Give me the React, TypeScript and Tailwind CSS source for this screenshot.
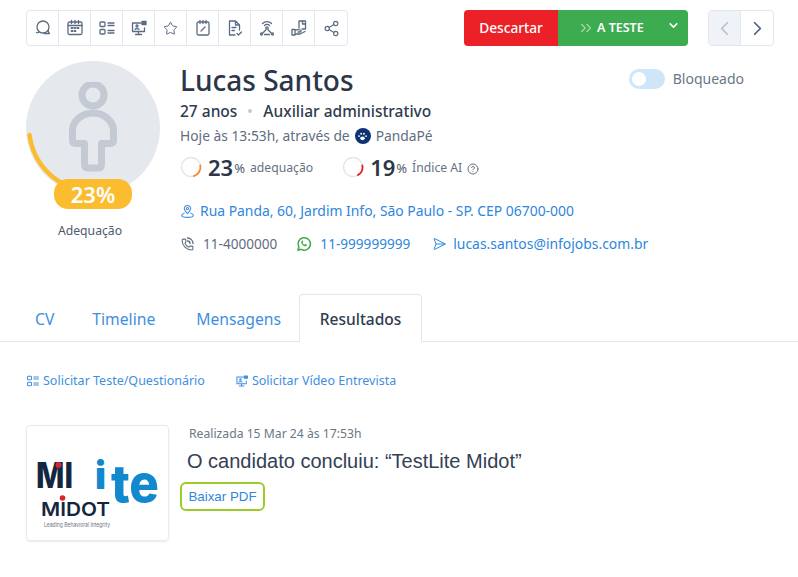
import { ChevronDown, ChevronLeft, ChevronRight, ChevronsRight, CircleHelp, Phone, Send, Share2, Star } from 'lucide-react';
import type { ReactNode } from 'react';

const ink = '#5b6b82';

function Glyph({ children, color = ink, size = 18 }: { children: ReactNode; color?: string; size?: number }) {
  return (
    <svg width={size} height={size} viewBox="0 0 18 18" fill="none" stroke={color} strokeWidth="1.3" strokeLinecap="round" strokeLinejoin="round">
      {children}
    </svg>
  );
}

const ChatIcon = () => (
  <Glyph>
    <circle cx="9" cy="8" r="6" />
    <path d="M2.500 13.500c1 .6 2 .4 3-.6M10 14.500h5.500c-.8-.7-1.200-1.600-1.200-2.800" />
  </Glyph>
);

const CalendarIcon = () => (
  <Glyph>
    <rect x="2" y="3" width="14" height="12.500" rx="1.500" />
    <path d="M2 6.500h14M5.500 1.500v3M9 1.500v3M12.500 1.500v3" />
    <path d="M5.500 9h1M8.500 9h1M11.500 9h1M5.500 12h1M8.500 12h1" strokeWidth="1.800" />
  </Glyph>
);

const ListIcon = ({ color = ink, size = 18 }: { color?: string; size?: number }) => (
  <Glyph color={color} size={size}>
    <rect x="2" y="3" width="5" height="4.500" rx="1" />
    <rect x="2" y="10.500" width="5" height="4.500" rx="1" />
    <path d="M10 4h6M10 6.500h6M10 11.500h6M10 14h6" />
  </Glyph>
);

const ScreenIcon = ({ color = ink, size = 18 }: { color?: string; size?: number }) => (
  <Glyph color={color} size={size}>
    <path d="M11 4H2.500v8.500h12V9M8.500 12.500V15.500M5.500 15.500h6" />
    <circle cx="7" cy="7" r="1" />
    <path d="M5 10.500c.4-1.300 3.600-1.300 4 0" />
    <path d="M12 2.500h4v3h-4z" fill={color} />
  </Glyph>
);

const NoteIcon = () => (
  <Glyph>
    <rect x="3" y="3" width="12" height="13" rx="1.500" />
    <path d="M6 1.500v3M9 1.500v3M12 1.500v3M7 12l4-4" />
  </Glyph>
);

const FileCheckIcon = () => (
  <Glyph>
    <path d="M9 16H3.500V2h6l4 4v5M9.500 2v4h4" />
    <path d="M6 8.500h4M6 11.500h2.500M11 14.500l1.500 1.500 3-3" />
  </Glyph>
);

const SignalIcon = () => (
  <Glyph>
    <circle cx="9" cy="9" r="1.200" />
    <path d="M6.500 6.500a3.500 3.500 0 0 1 5 0M4.500 4.500a6.500 6.500 0 0 1 9 0" />
    <path d="M7.800 11l-3 3M10.200 11l3 3M6.500 15.500h5" />
    <circle cx="3.500" cy="15" r="1" />
    <circle cx="14.500" cy="15" r="1" />
  </Glyph>
);

const HandDocIcon = () => (
  <Glyph>
    <path d="M9 9V2h6.500v8H12" />
    <path d="M12.500 2v3h3" />
    <path d="M2 10.500h3v5.500H2zM5 11.500c2-1.500 4-1 5.500-.5 1 .5.500 2-.5 2H8M5 15h5l5-2.500" />
  </Glyph>
);

const PinIcon = () => (
  <Glyph color="#3f8fe0" size={15}>
    <path d="M9 11.500c-2-2-3.800-3.800-3.800-6a3.800 3.800 0 0 1 7.600 0c0 2.200-1.800 4-3.800 6z" />
    <circle cx="9" cy="5.500" r="1.300" />
    <path d="M5 11c-1.800.6-3 1.500-3 2.500C2 15 5 16 9 16s7-1 7-2.500c0-1-1.200-1.900-3-2.500" />
  </Glyph>
);

const WhatsappIcon = () => (
  <svg width="16" height="16" viewBox="0 0 18 18" fill="none">
    <path d="M2.200 16l1-3.600A7 7 0 1 1 5.800 15z" stroke="#3fa84c" strokeWidth="1.700" strokeLinejoin="round" />
    <path d="M6.500 5.500c-1 1-.8 2.500.5 4s3 2.400 4.300 1.900c.8-.3 1.100-1 1-1.500l-1.800-.9-.8.900c-1-.4-1.900-1.300-2.400-2.400l.8-.8-.8-1.800c-.1-.1-.2 0-.8.600z" fill="#3fa84c" />
  </svg>
);

const PhoneWavesIcon = () => (
  <span className="relative flex h-[14px] w-[14px] items-center justify-center">
    <Phone size={13} color="#5f6d80" strokeWidth={2} />
    <svg width="14" height="14" viewBox="0 0 14 14" fill="none" stroke="#5f6d80" strokeWidth="1.300" strokeLinecap="round" className="absolute inset-0">
      <path d="M7.500 1a5.500 5.500 0 0 1 5.500 5.500M7.500 4a2.500 2.500 0 0 1 2.500 2.500" />
    </svg>
  </span>
);

function Ring({ stroke, dash }: { stroke: string; dash: string }) {
  return (
    <svg width="22" height="22" viewBox="0 0 22 22" fill="none" className="shrink-0">
      <circle cx="11" cy="11" r="9.500" stroke="#e2e6ec" strokeWidth="1.500" />
      <circle cx="11" cy="11" r="9.500" stroke={stroke} strokeWidth="1.800" strokeDasharray={dash} pathLength={100} transform="rotate(-10 11 11)" strokeLinecap="round" />
    </svg>
  );
}

function Avatar() {
  return (
    <div className="relative h-[149px] w-[134px] shrink-0">
      <div className="flex h-[134px] w-[134px] items-center justify-center rounded-full bg-[#e5e8ed]">
        <svg width="50" height="92" viewBox="0 0 50 92" fill="none" stroke="#c3cad4" strokeWidth="7" strokeLinejoin="round" className="mt-[-1px]">
          <circle cx="25" cy="13" r="11" />
          <path d="M25 31c-11 0-20.500 8-20.500 18v9.500c0 2 1 3 3 3h9v20.500c0 3 1 4 3.500 4h10c2.500 0 3.500-1 3.500-4v-20.500h9c2 0 3-1 3-3v-9.500c0-10-9.500-18-20.500-18z" />
        </svg>
      </div>
      <svg width="134" height="134" viewBox="0 0 134 134" fill="none" className="absolute left-0 top-0">
        <path d="M3.500 74a64 64 0 0 0 36 50" stroke="#fbbc2f" strokeWidth="4.500" strokeLinecap="round" />
      </svg>
      <div className="absolute left-[28px] top-[118px] flex h-[30px] w-[78px] items-center justify-center rounded-[14px] bg-[#fcbc30] text-[22px] font-semibold text-white">
        23%
      </div>
    </div>
  );
}

function MidotLogo() {
  return (
    <svg width="130" height="92" viewBox="0 0 130 92">
      <text x="3" y="51" fontFamily="Inter, sans-serif" fontWeight="800" fontSize="36" fill="#14263f" textLength="37" lengthAdjust="spacingAndGlyphs">MI</text>
      <circle cx="25.500" cy="28" r="3" fill="#d8262c" />
      <text x="62" y="52" fontFamily="Inter, sans-serif" fontWeight="900" fontSize="38" fill="#1288cf" textLength="11" lengthAdjust="spacingAndGlyphs">i</text>
      <text x="78" y="65" fontFamily="Inter, sans-serif" fontWeight="800" fontSize="52" fill="#1288cf" textLength="48" lengthAdjust="spacingAndGlyphs">te</text>
      <text x="8" y="79" fontFamily="Inter, sans-serif" fontWeight="600" fontSize="19" fill="#14263f" textLength="69" lengthAdjust="spacingAndGlyphs">MIDOT</text>
      <circle cx="29.500" cy="61" r="2.800" fill="#d8262c" />
      <text x="11" y="90" fontFamily="Inter, sans-serif" fontSize="5.500" fill="#6b7280" textLength="66" lengthAdjust="spacingAndGlyphs">Leading Behavioral Integrity</text>
    </svg>
  );
}

const toolbar = [
  <ChatIcon key="chat" />,
  <CalendarIcon key="calendar" />,
  <ListIcon key="list" />,
  <ScreenIcon key="screen" />,
  <Star key="star" size={15} color={ink} strokeWidth={1.6} />,
  <NoteIcon key="note" />,
  <FileCheckIcon key="file" />,
  <SignalIcon key="signal" />,
  <HandDocIcon key="hand" />,
  <Share2 key="share" size={17} color={ink} strokeWidth={1.6} />,
];

export default function App() {
  return (
    <div className="h-[577px] w-[798px] overflow-hidden bg-white font-['Noto_Sans',sans-serif] text-[#2f3b4e]">
      {/* Top actions */}
      <div className="flex items-start pl-[26px] pt-[10px]">
        <div className="flex h-[36px] shrink-0 rounded border border-[#e3e6ec]">
          {toolbar.map((icon, i) => (
            <div key={i} className="flex h-full w-[32px] items-center justify-center border-r border-[#e3e6ec] last:border-r-0">
              {icon}
            </div>
          ))}
        </div>
        <div className="ml-[116px] flex h-[36px] shrink-0 overflow-hidden rounded">
          <div className="flex w-[94px] items-center justify-center bg-[#ec2027] text-[13.700px] font-medium text-white">Descartar</div>
          <div className="flex w-[130px] items-center bg-[#3dab4f] pl-[19px] text-white">
            <ChevronsRight size={18} color="#a6dcae" strokeWidth={1.5} />
            <span className="ml-[2px] text-[12.500px] font-semibold">A TESTE</span>
            <ChevronDown size={13} strokeWidth={3} className="mb-[6px] ml-[23px]" />
          </div>
        </div>
        <div className="ml-[20px] flex h-[36px] shrink-0 rounded border border-[#e3e6ec]">
          <div className="flex w-[32px] items-center justify-center border-r border-[#e3e6ec] bg-[#eff2f6]">
            <ChevronLeft size={23} color="#b7c0cc" strokeWidth={1.8} />
          </div>
          <div className="flex w-[32px] items-center justify-center">
            <ChevronRight size={23} color="#4b6078" strokeWidth={1.8} />
          </div>
        </div>
      </div>

      {/* Candidate */}
      <div className="flex gap-[20px] px-[26px] pt-[15px]">
        <div className="flex flex-col items-center">
          <Avatar />
          <div className="mr-[6px] mt-[12px] text-[12.200px] text-[#4f5b6b]">Adequação</div>
        </div>
        <div className="flex-1">
          <div className="flex items-start justify-between pr-[28px]">
            <h1 className="text-[28px] font-medium leading-[38px] text-[#2b3648]">Lucas Santos</h1>
            <div className="mt-[7px] flex items-center gap-[8px]">
              <div className="flex h-[20px] w-[36px] items-center rounded-full bg-[#cfe5f8] px-[3px]">
                <div className="h-[14px] w-[14px] rounded-full bg-white" />
              </div>
              <span className="text-[14px] text-[#6a7789]">Bloqueado</span>
            </div>
          </div>
          <div className="mt-[1px] flex items-center text-[15.500px] font-medium leading-[22px] text-[#2f3b4e]">
            <span>27 anos</span>
            <span className="mx-[11px] h-[4px] w-[4px] rounded-full bg-[#c3cad4]" />
            <span>Auxiliar administrativo</span>
          </div>
          <div className="mt-[3px] flex items-center text-[13.800px] leading-[22px] text-[#5f6d80]">
            <span>Hoje às 13:53h, através de</span>
            <span className="mx-[5px] flex h-[16px] w-[16px] items-center justify-center rounded-full bg-[#0f3274]">
              <svg width="11" height="11" viewBox="0 0 12 12" fill="#fff">
                <ellipse cx="6" cy="8" rx="2.500" ry="2" />
                <circle cx="2.200" cy="5.500" r="1" />
                <circle cx="4.500" cy="3" r="1" />
                <circle cx="7.500" cy="3" r="1" />
                <circle cx="9.800" cy="5.500" r="1" />
              </svg>
            </span>
            <span>PandaPé</span>
          </div>
          <div className="mt-[4px] flex h-[32px] items-center">
            <Ring stroke="#f58a2c" dash="23 100" />
            <span className="ml-[6px] text-[22px] font-semibold text-[#2b3648]">23</span>
            <span className="ml-px mt-[4px] text-[13px] text-[#4d5a6c]">%</span>
            <span className="ml-[5px] mt-[3px] text-[12.200px] text-[#66727f]">adequação</span>
            <div className="ml-[29px] flex items-center">
              <Ring stroke="#e0201f" dash="19 100" />
              <span className="ml-[6px] text-[22px] font-semibold text-[#2b3648]">19</span>
              <span className="ml-px mt-[4px] text-[13px] text-[#4d5a6c]">%</span>
              <span className="ml-[5px] mt-[3px] text-[12.200px] text-[#66727f]">Índice AI</span>
              <CircleHelp size={12} color="#66727f" className="ml-[5px] mt-[3px]" />
            </div>
          </div>
          <div className="mt-[17px] flex items-center gap-[5px] text-[13.900px] leading-[22px] text-[#2f86dc]">
            <PinIcon />
            <span>Rua Panda, 60, Jardim Info, São Paulo - SP. CEP 06700-000</span>
          </div>
          <div className="mt-[11px] flex items-center text-[13.600px] leading-[22px]">
            <PhoneWavesIcon />
            <span className="ml-[9px] text-[#5f6d80]">11-4000000</span>
            <span className="ml-[19px]"><WhatsappIcon /></span>
            <span className="ml-[8px] text-[#2f86dc]">11-999999999</span>
            <Send size={14} color="#2f86dc" strokeWidth={1.6} className="ml-[20px] rotate-45" />
            <span className="ml-[9px] text-[13.900px] text-[#2f86dc]">lucas.santos@infojobs.com.br</span>
          </div>
        </div>
      </div>

      {/* Tabs */}
      <div className="mt-[39px] flex h-[48px] items-end border-b border-[#e3e6ec] pl-[16px] text-[15.700px] text-[#3f8fe0]">
        <div className="flex h-[47px] items-center px-[19px] pt-[4px]">CV</div>
        <div className="flex h-[47px] items-center px-[19px] pt-[4px]">Timeline</div>
        <div className="ml-[3px] flex h-[47px] items-center pl-[19px] pr-[18px] pt-[4px]">Mensagens</div>
        <div className="-mb-px flex h-[48px] w-[123px] items-center justify-center rounded-t border border-b-0 border-[#e3e6ec] bg-white pt-[2px] text-[15.500px] font-medium text-[#2f3b4e]">
          Resultados
        </div>
      </div>

      {/* Requests */}
      <div className="mt-[29px] flex items-center px-[26px] text-[12.500px] leading-[20px] text-[#3f8fe0]">
        <ListIcon color="#3f8fe0" size={14} />
        <span className="ml-[3px]">Solicitar Teste/Questionário</span>
        <span className="ml-[30px]"><ScreenIcon color="#3f8fe0" size={14} /></span>
        <span className="ml-[3px]">Solicitar Vídeo Entrevista</span>
      </div>

      {/* Result */}
      <div className="mt-[34px] flex px-[26px]">
        <div className="flex h-[116px] w-[143px] items-center justify-center rounded border border-[#e8eaee] shadow-[0_1px_2px_rgba(0,0,0,0.08)]">
          <MidotLogo />
        </div>
        <div className="ml-[11px] pt-[1px]">
          <div className="ml-[9px] text-[12.200px] leading-[16px] text-[#6b7686]">Realizada 15 Mar 24 às 17:53h</div>
          <div className="ml-[7px] mt-[6px] font-['Liberation_Sans',sans-serif] text-[20px] leading-[26px] text-[#344054]">O candidato concluiu: “TestLite Midot”</div>
          <div className="mt-[8px] flex h-[29px] w-[85px] items-center justify-center rounded-md border-2 border-[#9ccb2b] font-['Liberation_Sans',sans-serif] text-[13.330px] text-[#2f86dc]">
            Baixar PDF
          </div>
        </div>
      </div>
    </div>
  );
}
